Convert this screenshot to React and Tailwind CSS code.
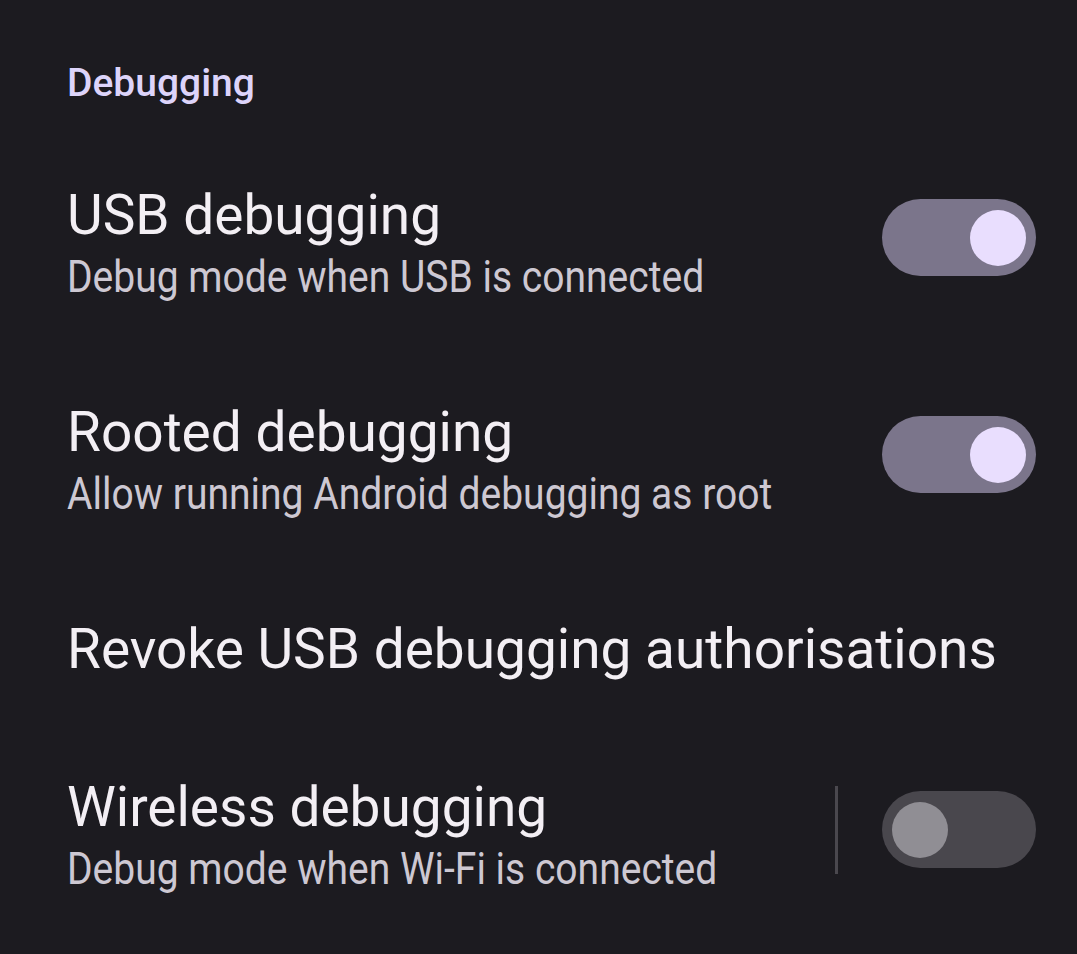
import React, { useState } from 'react'

function Toggle({ on, onClick }) {
  return (
    <button
      type="button"
      onClick={onClick}
      className={`flex items-center w-[154px] h-[77px] rounded-full px-[10px] shrink-0 ${
        on ? 'bg-[#7b758b] justify-end' : 'bg-[#49474d] justify-start'
      }`}
    >
      <span
        className={`block w-[56px] h-[56px] rounded-full ${on ? 'bg-[#e9defe]' : 'bg-[#908e94]'}`}
      />
    </button>
  )
}

function Row({ title, subtitle, children }) {
  return (
    <div className="flex items-center justify-between py-[48px]">
      <div className="flex flex-col">
        <div className="text-[55px] leading-[62px] text-[#f3eff4] whitespace-nowrap">{title}</div>
        {subtitle && (
          <div className="mt-[3px] text-[44px] leading-[56px] text-[#cdc8d2] whitespace-nowrap origin-left scale-x-[0.887]">
            {subtitle}
          </div>
        )}
      </div>
      {children && <div className="-translate-y-[7px]">{children}</div>}
    </div>
  )
}

export default function App() {
  const [usb, setUsb] = useState(true)
  const [rooted, setRooted] = useState(true)
  const [wireless, setWireless] = useState(false)

  return (
    <div
      className="min-h-screen bg-[#1c1b20] pl-[67px] pr-[41px] pt-[60px]"
      style={{ fontFamily: 'Roboto, "Liberation Sans", sans-serif' }}
    >
      <div className="text-[39px] leading-[46px] font-medium text-[#ddd4fa] mb-[30px]">
        Debugging
      </div>

      <Row title="USB debugging" subtitle="Debug mode when USB is connected">
        <Toggle on={usb} onClick={() => setUsb(!usb)} />
      </Row>

      <Row title="Rooted debugging" subtitle="Allow running Android debugging as root">
        <Toggle on={rooted} onClick={() => setRooted(!rooted)} />
      </Row>

      <Row title="Revoke USB debugging authorisations" />

      <Row title="Wireless debugging" subtitle="Debug mode when Wi-Fi is connected">
        <div className="flex items-center gap-[44px]">
          <div className="w-[3px] h-[88px] bg-[#4a484e]" />
          <Toggle on={wireless} onClick={() => setWireless(!wireless)} />
        </div>
      </Row>
    </div>
  )
}
